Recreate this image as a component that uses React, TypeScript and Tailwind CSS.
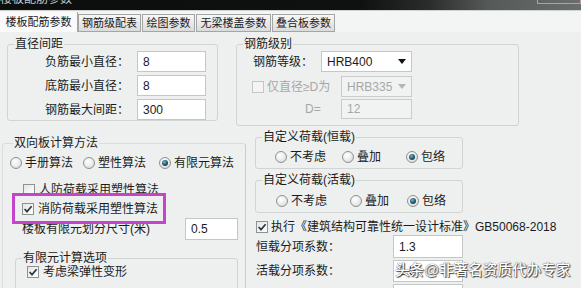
import React from "react";

function Radio({ checked }: { checked?: boolean }) {
  return (
    <span className="flex h-[12px] w-[12px] shrink-0 items-center justify-center rounded-full border border-[#8d9291] bg-[radial-gradient(circle_at_40%_35%,#ffffff_0%,#e8eaea_55%,#c9cccc_100%)]">
      {checked && (
        <span className="h-[6px] w-[6px] rounded-full bg-[radial-gradient(circle_at_40%_35%,#7fb2c8_0%,#235a72_50%,#0f2b3a_100%)]" />
      )}
    </span>
  );
}

function Check({ checked, disabled }: { checked?: boolean; disabled?: boolean }) {
  return (
    <span
      className={`flex h-[12px] w-[12px] shrink-0 items-center justify-center border ${
        disabled
          ? "border-[#c4c7c6] bg-[#f3f4f4]"
          : "border-[#8e9392] bg-[linear-gradient(135deg,#e3e6e6,#ffffff)]"
      }`}
    >
      {checked && (
        <svg width="10" height="10" viewBox="0 0 10 10">
          <path d="M1.6 5 L4 7.6 L8.6 2.2" fill="none" stroke="#2c3944" strokeWidth="1.7" />
        </svg>
      )}
    </span>
  );
}

function Field({
  value,
  className,
  disabled,
  select,
}: {
  value: string;
  className: string;
  disabled?: boolean;
  select?: boolean;
}) {
  return (
    <div
      className={`flex shrink-0 items-center justify-between border pl-[5px] pr-[5px] text-[12px] ${
        disabled
          ? "border-[#c9cccb] bg-[#f1f2f2] text-[#a5a8a7]"
          : "border-[#c3c7c6] bg-white text-[#1b1b1b]"
      } ${className}`}
    >
      <span>{value}</span>
      {select && (
        <svg width="8" height="5" viewBox="0 0 8 5">
          <path d="M0 0H8L4 5Z" fill={disabled ? "#b3b6b5" : "#111"} />
        </svg>
      )}
    </div>
  );
}

function Opt({ checked, label, w }: { checked?: boolean; label: string; w: string }) {
  return (
    <span className={`flex items-center gap-[3px] ${w}`}>
      <Radio checked={checked} />
      <span>{label}</span>
    </span>
  );
}

export default function App() {
  return (
    <div className="relative h-[288px] w-[581px] overflow-hidden bg-[#eef0ef] text-[12px] leading-none text-[#1b1b1b] font-[family-name:'Liberation_Sans','Noto_Sans_CJK_SC',sans-serif]">
      {/* title bar */}
      <div className="flex h-[10px] overflow-hidden bg-[linear-gradient(90deg,#0c0e0e_0%,#0f1111_62%,#2a2d2c_74%,#555957_84%,#6a6e6c_100%)]">
        <span className="-mt-[8px] block leading-[14px] text-[#c3c7c5]">楼板配筋参数</span>
        <span className="ml-auto h-[4px] w-[44px] border-x border-b border-[#c79a9a]" />
      </div>
      <div className="h-px bg-[#cfd2d1]" />

      {/* tabs */}
      <div className="flex h-[21px] items-end bg-[#f3f4f4] text-[11px]">
        <div className="flex h-[20px] w-[78px] items-center justify-center border-r border-[#a3a6a5] bg-[#fafafa]">
          楼板配筋参数
        </div>
        <div className="flex h-[18px] w-[63px] items-center justify-center border border-[#a3a6a5] bg-[linear-gradient(#f7f7f7,#dadbdb)]">
          钢筋级配表
        </div>
        <div className="ml-px flex h-[18px] w-[53px] items-center justify-center border border-[#a3a6a5] bg-[linear-gradient(#f7f7f7,#dadbdb)]">
          绘图参数
        </div>
        <div className="ml-px flex h-[18px] w-[75px] items-center justify-center border border-[#a3a6a5] bg-[linear-gradient(#f7f7f7,#dadbdb)]">
          无梁楼盖参数
        </div>
        <div className="ml-px flex h-[18px] w-[63px] items-center justify-center border border-[#a3a6a5] bg-[linear-gradient(#f7f7f7,#dadbdb)]">
          叠合板参数
        </div>
      </div>

      {/* row 1 */}
      <div className="flex items-start">
        <fieldset className="ml-[7px] mt-[5px] h-[84px] w-[211px] rounded-[3px] border border-[#d0d4d3]">
          <legend className="ml-[6px] px-[1px] leading-[14px]">直径间距</legend>
          <div className="flex flex-col gap-[3px] pl-[37px]">
            <div className="flex h-[21px] items-center">
              <span className="w-[92px]">负筋最小直径：</span>
              <Field value="8" className="h-[21px] w-[69px]" />
            </div>
            <div className="flex h-[21px] items-center">
              <span className="w-[92px]">底筋最小直径：</span>
              <Field value="8" className="h-[21px] w-[69px]" />
            </div>
            <div className="flex h-[21px] items-center">
              <span className="w-[92px]">钢筋最大间距：</span>
              <Field value="300" className="h-[21px] w-[69px]" />
            </div>
          </div>
        </fieldset>

        <fieldset className="ml-[18px] mt-[5px] h-[89px] w-[283px] rounded-[3px] border border-[#d0d4d3]">
          <legend className="ml-[6px] px-[1px] leading-[14px]">钢筋级别</legend>
          <div className="flex flex-col pl-[15px]">
            <div className="flex h-[21px] items-center">
              <span className="ml-px w-[68px]">钢筋等级：</span>
              <Field value="HRB400" select className="h-[21px] w-[91px]" />
            </div>
            <div className="mt-[4px] flex h-[21px] items-center">
              <Check disabled />
              <span className="ml-[3px] w-[74px] text-[#a5a8a7]">仅直径≥D为</span>
              <Field value="HRB335" select disabled className="h-[21px] w-[71px]" />
            </div>
            <div className="mt-[2px] flex h-[20px] items-center">
              <span className="ml-[53px] w-[36px] text-[#a5a8a7]">D=</span>
              <Field value="12" disabled className="h-[20px] w-[71px]" />
            </div>
          </div>
        </fieldset>
      </div>

      {/* row 2 */}
      <div className="flex items-start">
        <fieldset className="ml-[2px] mt-[10px] h-[200px] w-[244px] rounded-[3px] border border-[#d9dcdb] border-r-[#c9cdcc]">
          <legend className="ml-[10px] px-[1px] leading-[14px]">双向板计算方法</legend>
          <div className="mt-[6px] flex h-[14px] items-center pl-[7px]">
            <Opt label="手册算法" w="w-[73px]" />
            <Opt label="塑性算法" w="w-[76px]" />
            <Opt label="有限元算法" checked w="w-[80px]" />
          </div>
          <div className="mt-[13px] flex h-[14px] items-center gap-[4px] pl-[20px]">
            <Check />
            <span>人防荷载采用塑性算法</span>
          </div>
          <div className="mt-[5px] flex h-[14px] items-center gap-[4px] pl-[19px]">
            <Check checked />
            <span>消防荷载采用塑性算法</span>
          </div>
          <div className="mt-[2px] flex h-[22px] items-center pl-[19px]">
            <span className="w-[163px]">楼板有限元划分尺寸(米)</span>
            <Field value="0.5" className="h-[22px] w-[53px]" />
          </div>
          <fieldset className="ml-[12px] mt-[11px] h-[60px] w-[223px] rounded-[3px] border border-[#d0d4d3]">
            <legend className="ml-[6px] px-[1px] leading-[14px]">有限元计算选项</legend>
            <div className="flex h-[14px] items-center gap-[4px] pl-[11px]">
              <Check checked />
              <span>考虑梁弹性变形</span>
            </div>
          </fieldset>
        </fieldset>

        <div className="ml-[9px] flex w-[208px] flex-col">
          <fieldset className="mt-[4px] h-[39px] w-[208px] rounded-[3px] border border-[#d0d4d3]">
            <legend className="ml-[6px] px-[1px] leading-[14px]">自定义荷载(恒载)</legend>
            <div className="mt-[6px] flex h-[14px] items-center pl-[19px]">
              <Opt label="不考虑" w="w-[67px]" />
              <Opt label="叠加" w="w-[64px]" />
              <Opt label="包络" checked w="w-[50px]" />
            </div>
          </fieldset>
          <fieldset className="mt-[4px] h-[40px] w-[208px] rounded-[3px] border border-[#d0d4d3]">
            <legend className="ml-[6px] px-[1px] leading-[14px]">自定义荷载(活载)</legend>
            <div className="mt-[7px] flex h-[14px] items-center pl-[20px]">
              <Opt label="不考虑" w="w-[74px]" />
              <Opt label="叠加" w="w-[57px]" />
              <Opt label="包络" checked w="w-[50px]" />
            </div>
          </fieldset>
          <div className="mt-[7px] flex h-[14px] items-center gap-[3px] pl-[1px] whitespace-nowrap">
            <Check checked />
            <span>执行《建筑结构可靠性统一设计标准》GB50068-2018</span>
          </div>
          <div className="mt-[1px] flex h-[23px] items-center pl-[1px]">
            <span className="w-[137px]">恒载分项系数：</span>
            <Field value="1.3" className="h-[23px] w-[70px]" />
          </div>
          <div className="mt-[2px] flex h-[22px] items-center pl-[1px]">
            <span className="w-[137px]">活载分项系数：</span>
            <Field value="1.5" className="h-[22px] w-[70px]" />
          </div>
          <div className="mt-[2px] flex h-[22px] items-center pl-[1px]">
            <span className="w-[137px]">结构重要性系数：</span>
            <Field value="1" className="h-[22px] w-[70px]" />
          </div>
        </div>
      </div>

      {/* highlight rectangle */}
      <div className="absolute left-[12px] top-[193px] h-[31px] w-[154px] border-[3px] border-[#c445cc]" />

      {/* watermark */}
      <div className="absolute left-[395px] top-[259px] whitespace-nowrap text-[14.6px] font-medium leading-[22px] text-white [text-shadow:0_0_1px_#222,1px_1px_1px_#444]">
        头条@非著名资质代办专家
      </div>
    </div>
  );
}
